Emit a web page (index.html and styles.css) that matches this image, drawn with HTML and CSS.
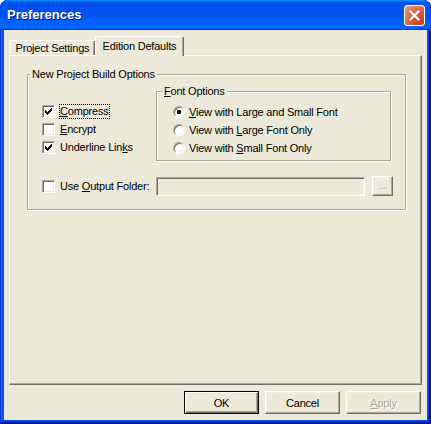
FILE: index.html
```html
<!DOCTYPE html>
<html>
<head>
<meta charset="utf-8">
<link rel="stylesheet" href="styles.css">
</head>
<body>
<div class="window">
  <div class="titlebar">
    <span class="title">Preferences</span>
    <span class="close"><svg width="19" height="19" viewBox="0 0 19 19"><path d="M5.5 5.5 L13.5 13.5 M13.5 5.5 L5.5 13.5" stroke="#fff" stroke-width="2.2" stroke-linecap="square"/></svg></span>
  </div>
  <div class="body">
    <div class="tabs">
      <div class="tab first">Project Settings</div>
      <div class="tab active">Edition Defaults</div>
    </div>
    <div class="panel">
      <div class="group main">
        <span class="legend">New Project Build Options</span>
        <div class="toprow">
          <div class="checks">
            <div class="row"><span class="cb"><svg class="tick" width="7" height="7" viewBox="0 0 7 7" shape-rendering="crispEdges"><path d="M0 2h1v3h-1z M1 3h1v3h-1z M2 4h1v3h-1z M3 3h1v3h-1z M4 2h1v3h-1z M5 1h1v3h-1z M6 0h1v3h-1z" fill="#000"/></svg></span><span class="lbl focus"><u>C</u>ompress</span></div>
            <div class="row"><span class="cb"></span><span class="lbl"><u>E</u>ncrypt</span></div>
            <div class="row"><span class="cb"><svg class="tick" width="7" height="7" viewBox="0 0 7 7" shape-rendering="crispEdges"><path d="M0 2h1v3h-1z M1 3h1v3h-1z M2 4h1v3h-1z M3 3h1v3h-1z M4 2h1v3h-1z M5 1h1v3h-1z M6 0h1v3h-1z" fill="#000"/></svg></span><span class="lbl">Underline Lin<u>k</u>s</span></div>
          </div>
          <div class="group fonts">
            <span class="legend"><u>F</u>ont Options</span>
            <div class="row"><span class="radio"><span class="dot"></span></span><span class="lbl"><u>V</u>iew with Large and Small Font</span></div>
            <div class="row"><span class="radio"></span><span class="lbl">View with <u>L</u>arge Font Only</span></div>
            <div class="row"><span class="radio"></span><span class="lbl">View with <u>S</u>mall Font Only</span></div>
          </div>
        </div>
        <div class="outrow">
          <div class="outlabel"><span class="cb"></span><span class="lbl">Use <u>O</u>utput Folder:</span></div>
          <div class="field"></div>
          <div class="btn dots">...</div>
        </div>
      </div>
    </div>
    <div class="buttons">
      <div class="btn default">OK</div>
      <div class="btn">Cancel</div>
      <div class="btn disabled"><u>A</u>pply</div>
    </div>
  </div>
</div>
</body>
</html>
```

FILE: styles.css
```css
* { box-sizing: border-box; }
html, body { margin: 0; padding: 0; background: #fff; }

.window {
  width: 431px;
  height: 424px;
  display: flex;
  flex-direction: column;
  background: #0055EA;
  border-radius: 8px 8px 0 0;
  overflow: hidden;
  font-family: "Liberation Sans", Arial, sans-serif;
  font-size: 11px;
  letter-spacing: -0.2px;
  color: #000;
  box-shadow: inset -1px -1px #00138C, inset 1px 1px #0831D9, inset -2px -2px #001EA0, inset 2px 2px #166AEE, inset -3px -3px #003BDA, inset 3px 3px #0855DD;
}

.titlebar {
  height: 30px;
  flex: none;
  display: flex;
  align-items: center;
  padding: 0 6px 0 7px;
  border-radius: 8px 8px 0 0;
  background: linear-gradient(180deg, #0997FF, #0053EE 8%, #0050EE 40%, #0066FF 88%, #0066FF 93%, #005BFF 95%, #003DD7 96%, #003DD7);
}

.title {
  flex: 1;
  color: #fff;
  font: bold 13px "Liberation Sans", Arial, sans-serif;
  letter-spacing: 0;
  text-shadow: 1px 1px #0F1089;
  margin-top: -1px;
}

.close {
  width: 21px;
  height: 21px;
  border: 1px solid #fff;
  border-radius: 3px;
  background: radial-gradient(circle at 85% 85%, #C4401C 0%, #E05A35 45%, #E9825F 80%, #F3B9A2 100%);
  display: flex;
}

.body {
  flex: 1;
  margin: 0 4px 4px;
  background: #ECE9D8;
  padding: 6px 5px 0;
  display: flex;
  flex-direction: column;
}

.tabs {
  height: 19px;
  flex: none;
  display: flex;
  align-items: flex-end;
  padding-left: 1px;
  position: relative;
  z-index: 1;
}

.tab {
  height: 15px;
  display: flex;
  align-items: center;
  justify-content: center;
  background: #ECE9D8;
  border-top: 1px solid #fff;
  border-left: 1px solid #fff;
  border-right: 1px solid #716F64;
  border-radius: 2px 2px 0 0;
  box-shadow: inset -1px 0 #ACA899;
}

.tab.first { width: 85px; }

.tab.active {
  width: 89px;
  height: 20px;
  margin-bottom: -1px;
  padding-bottom: 2px;
}

.panel {
  height: 330px;
  flex: none;
  border: 1px solid;
  border-color: #fff #716F64 #716F64 #fff;
  box-shadow: inset -1px -1px #ACA899;
  padding: 18px 0 0 17px;
}

.group {
  position: relative;
  border: 1px solid #ACA899;
  box-shadow: inset 1px 1px #fff, 1px 1px #fff;
}

.legend {
  position: absolute;
  top: -7px;
  left: 2px;
  padding: 0 2px;
  line-height: 13px;
  background: #ECE9D8;
  white-space: nowrap;
}

.main {
  width: 379px;
  height: 136px;
  padding: 16px 0 0 14px;
}

.toprow { display: flex; }

.checks {
  width: 114px;
  padding-top: 11px;
}

.row {
  height: 18px;
  display: flex;
  align-items: center;
  white-space: nowrap;
}

.lbl { line-height: 13px; }

.focus { outline: 1px dotted #000; }

.cb {
  width: 13px;
  height: 13px;
  flex: none;
  margin-right: 5px;
  background: #fff;
  border: 1px solid;
  border-color: #ACA899 #fff #fff #ACA899;
  box-shadow: inset 1px 1px #716F64, inset -1px -1px #F1EFE2;
  display: flex;
  align-items: center;
  justify-content: center;
}

.tick { display: block; margin: 0 0 0 0; }

.fonts {
  width: 235px;
  height: 70px;
  padding: 11px 0 0 16px;
}

.fonts .legend { left: 5px; }

.radio {
  width: 12px;
  height: 12px;
  flex: none;
  margin-right: 4px;
  border-radius: 50%;
  background: #fff;
  border: 1px solid;
  border-color: #ACA899 #fff #fff #ACA899;
  box-shadow: inset 1px 1px #716F64, inset -1px -1px #F1EFE2;
  display: flex;
  align-items: center;
  justify-content: center;
}

.dot {
  width: 4px;
  height: 4px;
  border-radius: 1px;
  background: #000;
}

.outrow {
  display: flex;
  align-items: center;
  height: 20px;
  margin-top: 15px;
}

.outlabel {
  width: 114px;
  display: flex;
  align-items: center;
  white-space: nowrap;
}

.field {
  width: 209px;
  height: 19px;
  border: 1px solid;
  border-color: #ACA899 #fff #fff #ACA899;
  box-shadow: inset 1px 1px #716F64, inset -1px -1px #F1EFE2;
}

.btn {
  width: 75px;
  height: 23px;
  display: flex;
  align-items: center;
  justify-content: center;
  background: #ECE9D8;
  border: 1px solid;
  border-color: #fff #716F64 #716F64 #fff;
  box-shadow: inset -1px -1px #ACA899, inset 1px 1px #F1EFE2;
}

.btn.dots {
  width: 21px;
  height: 20px;
  margin-left: 7px;
  color: #ACA899;
  font-size: 10px;
  padding-bottom: 2px;
}

.buttons {
  display: flex;
  justify-content: flex-end;
  gap: 6px;
  margin-top: 6px;
  margin-right: 1px;
}

.btn.default {
  border: 1px solid #000;
  box-shadow: inset 1px 1px #fff, inset -1px -1px #716F64, inset -2px -2px #ACA899;
}

.btn.disabled {
  color: #ACA899;
  text-shadow: 1px 1px #fff;
}
```
